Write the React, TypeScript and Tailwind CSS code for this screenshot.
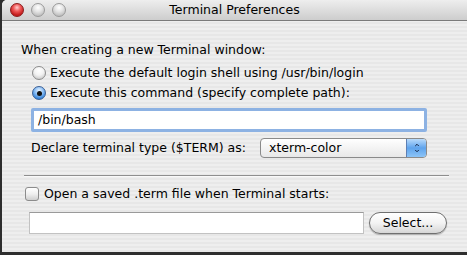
import { ChevronDown, ChevronUp } from 'lucide-react';

const font = { fontFamily: '"DejaVu Sans", "Liberation Sans", sans-serif' };

function Light({ red }: { red?: boolean }) {
  return (
    <div
      className={`w-[14px] h-[14px] rounded-full border ${
        red
          ? 'border-[#8a1c1c] bg-[radial-gradient(circle_at_50%_30%,#ffd0d0_0%,#f05a5a_35%,#c01818_75%,#e06060_100%)]'
          : 'border-[#9a9a9a] bg-[radial-gradient(circle_at_50%_30%,#ffffff_0%,#e4e4e4_40%,#bdbdbd_80%,#dcdcdc_100%)]'
      }`}
    />
  );
}

function Radio({ checked, label }: { checked?: boolean; label: string }) {
  return (
    <div className="flex items-center h-[20px]">
      <div
        className={`w-[14px] h-[14px] rounded-full border flex items-center justify-center ${
          checked
            ? 'border-[#3a5f95] bg-[radial-gradient(circle_at_50%_30%,#e6f2ff_0%,#8ec0f5_40%,#2f7fd6_80%,#7fb8f0_100%)]'
            : 'border-[#8c8c8c] bg-[radial-gradient(circle_at_50%_30%,#ffffff_0%,#f2f2f2_45%,#c9c9c9_85%,#e2e2e2_100%)]'
        }`}
      >
        {checked && <div className="w-[5px] h-[5px] rounded-full bg-[#111]" />}
      </div>
      <span className="ml-[4px] text-[12.5px] text-black">{label}</span>
    </div>
  );
}

export default function App() {
  return (
    <div className="w-[467px] h-[255px] bg-[#2e2e2e] overflow-hidden" style={font}>
      <div className="ml-[2px] h-[252px] rounded-tl-[5px] overflow-hidden flex flex-col bg-[repeating-linear-gradient(180deg,#eeeeee_0px,#eeeeee_2px,#e7e7e7_2px,#e7e7e7_4px)]">
        {/* title bar */}
        <div className="relative h-[21px] shrink-0 bg-gradient-to-b from-[#eeeeee] to-[#cdcdcd] border-b border-[#7a7a7a] flex items-center">
          <div className="flex items-center gap-[7px] pl-[8px]">
            <Light red />
            <Light />
            <Light />
          </div>
          <div className="absolute inset-0 flex items-center justify-center text-[12.5px] text-black">
            Terminal Preferences
          </div>
        </div>

        {/* body */}
        <div className="flex flex-col pl-[19px] pt-[21px] text-[12.5px] text-black">
          <div className="h-[16px] leading-[16px]">When creating a new Terminal window:</div>

          <div className="pl-[11px] mt-[5px] flex flex-col">
            <Radio label="Execute the default login shell using /usr/bin/login" />
            <Radio checked label="Execute this command (specify complete path):" />
          </div>

          <div className="ml-[10px] mt-[5px] w-[396px] h-[24px] rounded-[2px] border-[3px] border-[#8db2e3] bg-white flex items-center">
            <span className="pl-[4px]">/bin/bash</span>
          </div>

          <div className="ml-[10px] mt-[6px] flex items-center h-[20px]">
            <span className="w-[229px]">Declare terminal type ($TERM) as:</span>
            <div className="w-[167px] h-[20px] rounded-[4px] border border-[#8a8a8a] flex overflow-hidden bg-gradient-to-b from-[#ffffff] to-[#e8e8e8]">
              <div className="flex-1 flex items-center pl-[8px]">xterm-color</div>
              <div className="w-[20px] flex flex-col items-center justify-center border-l border-[#5d7fb4] bg-gradient-to-b from-[#b9dbfb] via-[#5ea3ec] to-[#8cc4f7]">
                <ChevronUp className="w-[8px] h-[6px] text-[#102040]" strokeWidth={4} />
                <ChevronDown className="w-[8px] h-[6px] text-[#102040]" strokeWidth={4} />
              </div>
            </div>
          </div>

          <div className="ml-[3px] mt-[17px] w-[425px] border-t border-t-[#8e8e8e] border-b border-b-[#f8f8f8]" />

          <div className="ml-[4px] mt-[9px] flex items-center h-[16px]">
            <div className="w-[14px] h-[14px] rounded-[3px] border border-[#8c8c8c] bg-gradient-to-b from-[#ffffff] via-[#efefef] to-[#cfcfcf]" />
            <span className="ml-[5px]">Open a saved .term file when Terminal starts:</span>
          </div>

          <div className="ml-[8px] mt-[10px] flex items-center">
            <div className="w-[335px] h-[22px] bg-white border border-[#c2c2c2] border-t-[#9a9a9a]" />
            <div className="ml-[5px] w-[78px] h-[22px] rounded-full border border-[#6f6f6f] bg-gradient-to-b from-[#ffffff] via-[#f3f3f3] to-[#d6d6d6] flex items-center justify-center shadow-[0_1px_1px_rgba(0,0,0,0.25)]">
              Select...
            </div>
          </div>
        </div>
      </div>
    </div>
  );
}
